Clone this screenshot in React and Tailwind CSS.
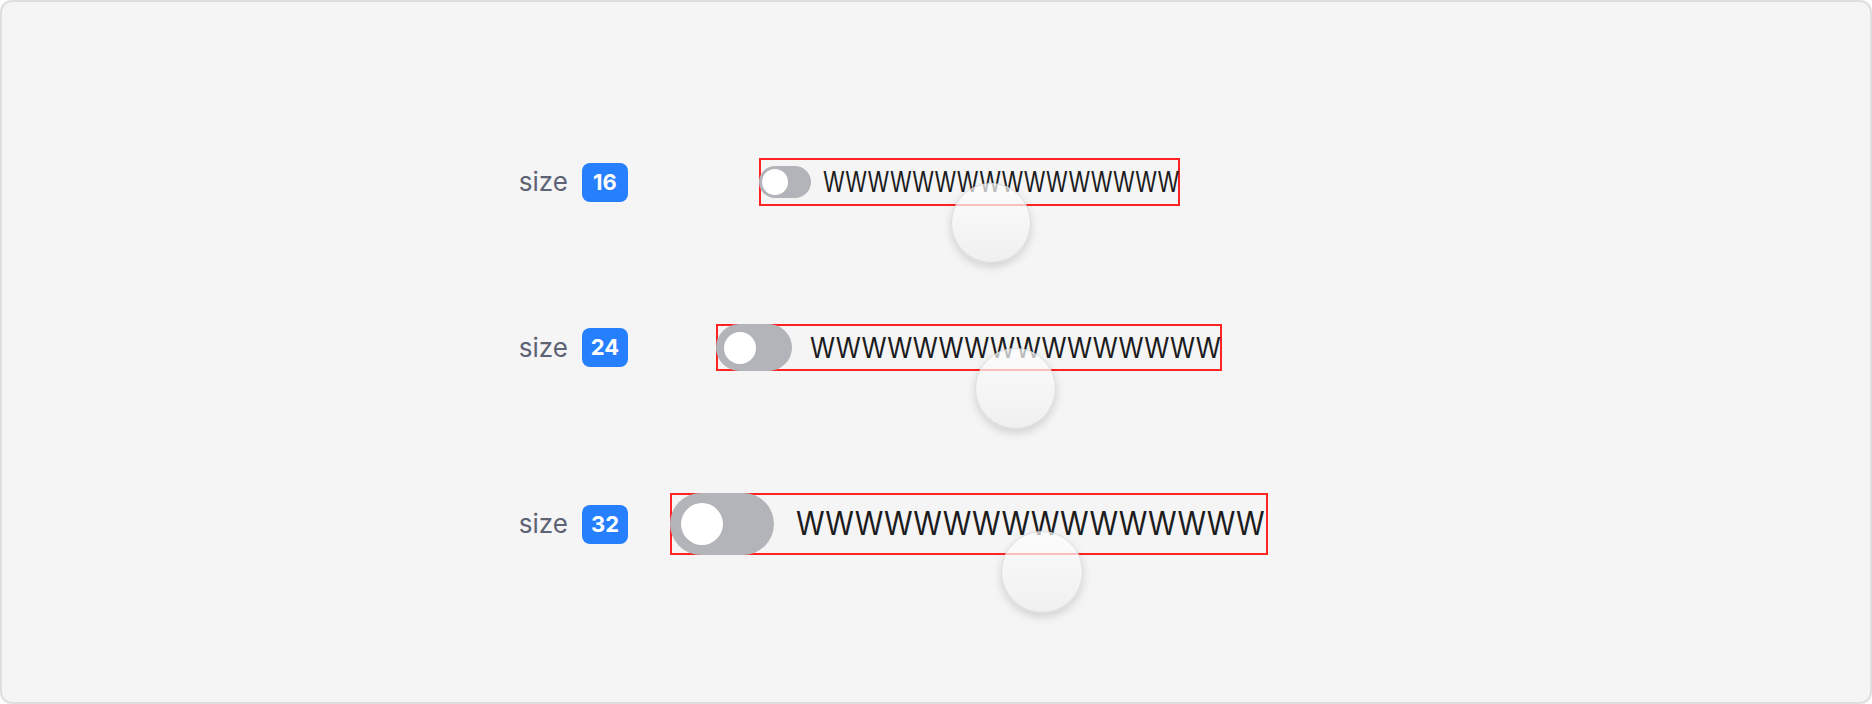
import React from "react";

const rows = [
  { n: "16", w: "w-[421px]", h: "h-[48px]", track: "w-[52px] h-[32px]", knob: "w-[26px] h-[26px] ml-[3px]", gap: "ml-[12px]", text: "text-[28px] scale-x-[0.789]", circle: "left-[192px] top-[25px] w-[80px] h-[80px]", mt: "" },
  { n: "24", w: "w-[506px]", h: "h-[47px]", track: "w-[76px] h-[47px]", knob: "w-[32px] h-[32px] ml-[8px]", gap: "ml-[18px]", text: "text-[29px] scale-x-[0.878]", circle: "left-[259px] top-[24px] w-[81px] h-[81px]", mt: "mt-[118px]" },
  { n: "32", w: "w-[598px]", h: "h-[62px]", track: "w-[104px] h-[62px]", knob: "w-[42px] h-[42px] ml-[11px]", gap: "ml-[22px]", text: "text-[32px] scale-x-[0.908]", circle: "left-[331px] top-[38px] w-[82px] h-[82px]", mt: "mt-[122px]" },
];

export default function App() {
  return (
    <div className="w-[1872px] h-[704px] bg-white" style={{ fontFamily: "Inter, 'Noto Sans', sans-serif" }}>
      <div className="relative w-full h-full bg-[#f5f5f5] border-2 border-[#dedede] rounded-[12px] pt-[156px] pl-[514px]">
        {rows.map((r) => (
          <div key={r.n} className={`flex items-center ${r.mt}`}>
            <div className="w-[112px] flex items-center justify-end">
              <span className="text-[26px] leading-none text-[#5d6374] mr-[14px]">size</span>
              <span className="w-[46px] h-[39px] rounded-[8px] bg-[#2680fd] text-white font-bold text-[22px] flex items-center justify-center">{r.n}</span>
            </div>
            <div className="w-[598px] ml-[42px] flex justify-center">
              <div className={`relative flex items-center ${r.w} ${r.h}`}>
                <div className="absolute inset-0 border-2 border-[#f22]"></div>
                <div className={`relative shrink-0 rounded-full bg-[#b2b4ba] flex items-center ${r.track}`}>
                  <div className={`rounded-full bg-white ${r.knob}`}></div>
                </div>
                <span className={`relative inline-block shrink-0 origin-left whitespace-nowrap text-[#1c1c1e] leading-none ${r.gap} ${r.text}`}>WWWWWWWWWWWWWWWW</span>
                <div className={`absolute rounded-full border border-[#dcdcdc] bg-gradient-to-b from-[#ffffffb0] to-[#eeeeeed0] shadow-[0_4px_10px_rgba(0,0,0,0.15)] ${r.circle}`}></div>
              </div>
            </div>
          </div>
        ))}
      </div>
    </div>
  );
}
